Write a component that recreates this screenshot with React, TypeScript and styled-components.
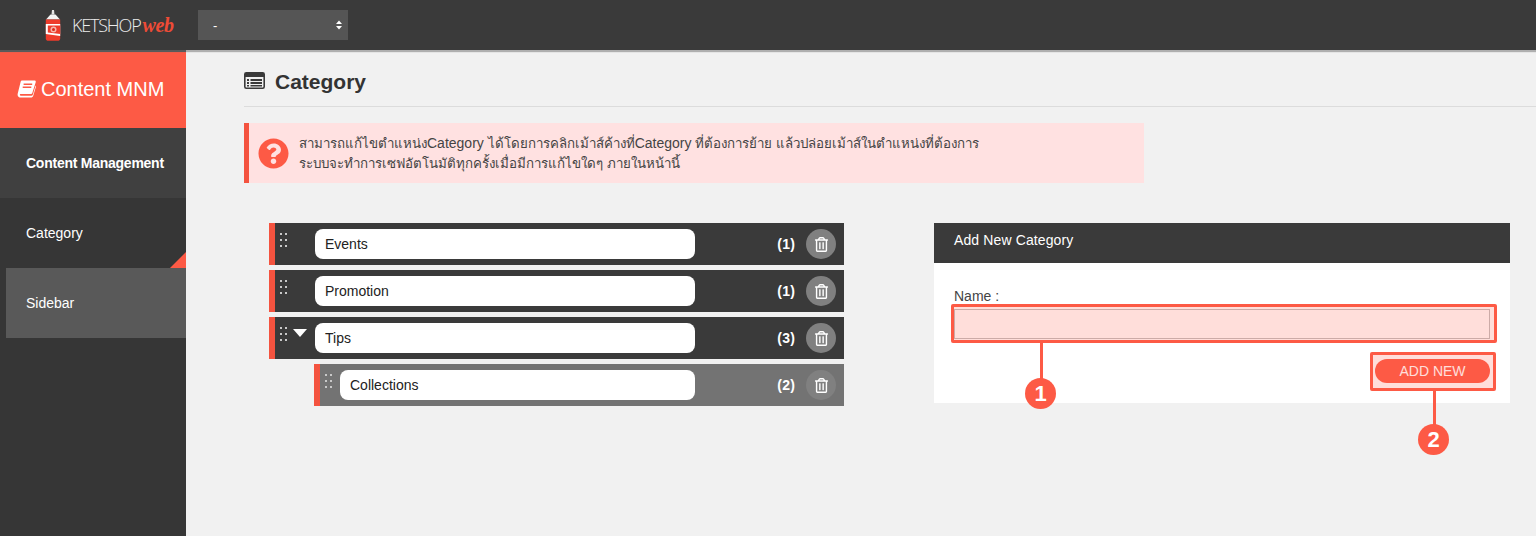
import React from 'react';
import styled, { createGlobalStyle } from 'styled-components';
import { FaQuestionCircle, FaRegTrashAlt } from 'react-icons/fa';

const RED = '#fd5a45';

const GlobalStyle = createGlobalStyle`
  html, body {
    margin: 0;
    padding: 0;
    height: 536px;
    overflow: hidden;
    background: #f1f1f1;
    font-family: "Liberation Sans", Arial, sans-serif;
    font-size: 14px;
    color: #333;
  }
  * { box-sizing: border-box; }
`;

const Page = styled.div`
  width: 1536px;
  height: 536px;
  display: flex;
  flex-direction: column;
  overflow: hidden;
`;

// Top bar
const TopBar = styled.header`
  height: 50px;
  flex: none;
  display: flex;
  align-items: center;
  padding-left: 45px;
  background: #3a3a3a;
  position: relative;
  z-index: 2;
  box-shadow: 0 2px 1px rgba(120, 120, 120, 0.55);
`;

const Logo = styled.div`
  width: 153px;
  display: flex;
  align-items: center;
  gap: 11px;
`;

const LogoWords = styled.div`
  display: flex;
  align-items: baseline;
  height: 24px;
  line-height: 24px;
`;

const LogoName = styled.span`
  font-family: "Open Sans", sans-serif;
  font-weight: 300;
  font-size: 18px;
  letter-spacing: -1.2px;
  color: #ececec;
`;

const LogoWeb = styled.span`
  font-family: "Liberation Serif", serif;
  font-style: italic;
  font-weight: 700;
  font-size: 20px;
  letter-spacing: -0.4px;
  color: #ee4b36;
  margin-left: 2px;
`;

const ShopSelect = styled.div`
  width: 150px;
  height: 30px;
  display: flex;
  align-items: center;
  justify-content: space-between;
  padding: 0 5px 0 15px;
  background: #555;
  color: #fff;
  font-size: 13px;
`;

// Sidebar
const Body = styled.div`
  flex: 1;
  display: flex;
  min-height: 0;
`;

const Sidebar = styled.aside`
  width: 186px;
  flex: none;
  padding-top: 2px;
  background: #363636;
`;

const Brand = styled.div`
  height: 76px;
  display: flex;
  align-items: center;
  gap: 5px;
  padding: 0 0 2px 17px;
  background: ${RED};
  color: #fff;
  font-size: 20px;
`;

const NavItem = styled.div<{ $tone: 'light' | 'plain' | 'active'; $corner?: boolean }>`
  height: 70px;
  display: flex;
  align-items: center;
  padding-left: ${(p) => (p.$tone === 'active' ? 20 : 26)}px;
  margin-left: ${(p) => (p.$tone === 'active' ? 6 : 0)}px;
  position: relative;
  color: #fff;
  font-weight: ${(p) => (p.$tone === 'light' ? 700 : 400)};
  letter-spacing: ${(p) => (p.$tone === 'light' ? '-0.25px' : '0')};
  background: ${(p) => (p.$tone === 'light' ? '#404040' : p.$tone === 'active' ? '#595959' : '#363636')};

  ${(p) =>
    p.$corner &&
    `&::after {
      content: '';
      position: absolute;
      right: 0;
      bottom: 0;
      border-style: solid;
      border-width: 0 0 16px 16px;
      border-color: transparent transparent ${RED} transparent;
    }`}
`;

// Main column
const Main = styled.main`
  flex: 1;
  min-width: 0;
  padding: 18px 0 0 58px;
`;

const TitleRow = styled.div`
  height: 39px;
  display: flex;
  align-items: flex-start;
  gap: 10px;
  border-bottom: 1px solid #dcdcdc;
  font-size: 21px;
  font-weight: 700;
  line-height: 28px;
  color: #333;
  svg {
    margin-top: 4px;
  }
`;

const Alert = styled.div`
  width: 900px;
  height: 60px;
  margin-top: 16px;
  display: flex;
  align-items: center;
  gap: 10px;
  padding-left: 9px;
  background: #ffe1e1;
  border-left: 5px solid #f4533f;
  font-size: 13.3px;
  line-height: 20px;
  color: #444;
  svg {
    flex: none;
    font-size: 31px;
    color: ${RED};
  }
`;

const AlertLatin = styled.span`
  font-size: 14px;
`;

const Columns = styled.div`
  display: flex;
  align-items: flex-start;
  gap: 90px;
  margin: 40px 0 0 25px;
`;

const CategoryList = styled.div`
  width: 575px;
  display: flex;
  flex-direction: column;
  gap: 5px;
`;

const CategoryRow = styled.div<{ $child?: boolean }>`
  height: 42px;
  display: flex;
  align-items: center;
  margin-left: ${(p) => (p.$child ? 45 : 0)}px;
  padding-right: 8px;
  position: relative;
  background: ${(p) => (p.$child ? '#737373' : '#3a3a3a')};
  border-left: 6px solid #f4533f;
`;

const Handle = styled.svg`
  position: absolute;
  left: 5px;
  top: 10px;
`;

const Caret = styled.div`
  position: absolute;
  left: 18px;
  top: 12px;
  border-style: solid;
  border-width: 8px 7.5px 0 7.5px;
  border-color: #fff transparent transparent transparent;
`;

const NameBox = styled.div<{ $child?: boolean }>`
  width: ${(p) => (p.$child ? 355 : 380)}px;
  height: 30px;
  margin-left: ${(p) => (p.$child ? 20 : 40)}px;
  padding-left: 10px;
  display: flex;
  align-items: center;
  background: #fff;
  border-radius: 8px;
  color: #222;
  font-size: 14px;
`;

const Count = styled.div`
  margin-left: auto;
  margin-right: 11px;
  color: #fff;
  font-weight: 700;
  font-size: 14px;
  letter-spacing: 0.2px;
`;

const TrashButton = styled.div`
  width: 30px;
  height: 30px;
  display: flex;
  align-items: center;
  justify-content: center;
  border-radius: 50%;
  background: #808080;
  color: #fff;
  font-size: 15px;
`;

// Add panel
const Panel = styled.section`
  width: 576px;
  height: 180px;
  position: relative;
  background: #fff;
`;

const PanelHead = styled.div`
  height: 40px;
  display: flex;
  align-items: center;
  padding: 0 0 6px 20px;
  background: #3a3a3a;
  color: #fff;
  font-size: 14px;
  letter-spacing: 0.12px;
`;

const PanelBody = styled.div`
  padding: 25px 20px 0;
  display: flex;
  flex-direction: column;
`;

const FieldLabel = styled.label`
  height: 21px;
  line-height: 16px;
  font-size: 14px;
  color: #444;
`;

const NameInput = styled.div`
  height: 30px;
  background: #fff;
  border: 1px solid #c0c0c0;
`;

const AddButton = styled.div`
  width: 115px;
  height: 24px;
  margin: 20px 0 0 auto;
  display: flex;
  align-items: center;
  justify-content: center;
  border-radius: 12px;
  background: ${RED};
  color: #fff;
  font-size: 14px;
`;

// Tutorial marks over the panel
const Highlight = styled.div<{ $x: number; $y: number; $w: number; $h: number }>`
  position: absolute;
  left: ${(p) => p.$x}px;
  top: ${(p) => p.$y}px;
  width: ${(p) => p.$w}px;
  height: ${(p) => p.$h}px;
  border: 3px solid ${RED};
  border-radius: 2px;
  background: rgba(253, 90, 69, 0.2);
`;

const CalloutLine = styled.div<{ $x: number; $y: number; $h: number }>`
  position: absolute;
  left: ${(p) => p.$x}px;
  top: ${(p) => p.$y}px;
  width: 3px;
  height: ${(p) => p.$h}px;
  background: ${RED};
`;

const CalloutBadge = styled.div<{ $x: number; $y: number }>`
  position: absolute;
  left: ${(p) => p.$x}px;
  top: ${(p) => p.$y}px;
  width: 31px;
  height: 31px;
  display: flex;
  align-items: center;
  justify-content: center;
  border-radius: 50%;
  background: ${RED};
  color: #fff;
  font-size: 22px;
  font-weight: 700;
`;

const BottleIcon = () => (
  <svg width="16" height="31" viewBox="0 0 16 31">
    <path d="M7 0h2l.5 4.5h-3z" fill="#e4e4e4" />
    <path d="M5.5 4.5h5L15 9.5H1z" fill="#f4f4f4" />
    <path d="M.8 9.5H15.2V28.5C15.2 30 14 30.8 12.8 30.8H3.2C2 30.8 .8 30 .8 28.5z" fill="#ee3b2b" />
    <path d="M.8 14H15.2V26L.8 24z" fill="#fff" />
    <path d="M2.8 15.5H15.2V24L2.8 22.5z" fill="#ee3b2b" />
    <circle cx="8.5" cy="19.5" r="3" fill="#f7b5ab" />
    <circle cx="8.5" cy="19.5" r="1.5" fill="#d8281a" />
  </svg>
);

const BookIcon = () => (
  <svg width="19" height="18" viewBox="0 0 19 18">
    <path d="M5 .5H17.5C18.5 .5 19 1.2 18.7 2.2L15.3 13C15 13.8 14.5 14 13.8 14H3.6C3 14 2.6 14.7 3 15.2 3.3 15.6 3.8 15.7 4.4 15.7H14.2C15 15.7 15.6 15.3 15.9 14.4L18.6 5.4 19 6.4 16.3 15.6C15.9 17 15 17.6 13.8 17.6H3.8C2 17.6.6 16.4.6 14.7.6 14 .7 13.5 1 12.6L3.6 2C3.8 1 4.3 .5 5 .5z" fill="#fff" />
    <path d="M6.6 4.2H15.2M5.7 7.2H14.3" stroke={RED} strokeWidth="1.4" />
  </svg>
);

const ListAltIcon = () => (
  <svg width="21" height="17" viewBox="0 0 21 17">
    <rect x="0.8" y="0.8" width="19.4" height="15.4" rx="1.5" fill="#f1f1f1" stroke="#3a3a3a" strokeWidth="1.6" />
    <rect x="1" y="1" width="19" height="4" fill="#3a3a3a" />
    <path d="M3 7h2v2H3zM3 10h2v2H3zM3 13h2v1.6H3z" fill="#3a3a3a" />
    <path d="M6.5 7h11.5v2H6.5zM6.5 10h11.5v2H6.5zM6.5 13h11.5v1.6H6.5z" fill="#3a3a3a" />
  </svg>
);

const SelectArrows = () => (
  <svg width="8" height="10" viewBox="0 0 8 10">
    <path d="M4 0.5 7 4H1zM4 9.5 1 6h6z" fill="#fff" />
  </svg>
);

const GripDots = () => (
  <Handle width="8" height="14" viewBox="0 0 8 14">
    {[0, 5].map((x) =>
      [0, 6, 12].map((y) => <rect key={`${x}-${y}`} x={x} y={y} width="2" height="2" fill="#c9c9c9" />)
    )}
  </Handle>
);

const categories = [
  { name: 'Events', count: 1 },
  { name: 'Promotion', count: 1 },
  { name: 'Tips', count: 3, open: true },
  { name: 'Collections', count: 2, child: true },
];

export default function App() {
  return (
    <Page>
      <GlobalStyle />
      <TopBar>
        <Logo>
          <BottleIcon />
          <LogoWords>
            <LogoName>KETSHOP</LogoName>
            <LogoWeb>web</LogoWeb>
          </LogoWords>
        </Logo>
        <ShopSelect>
          -
          <SelectArrows />
        </ShopSelect>
      </TopBar>
      <Body>
        <Sidebar>
          <Brand>
            <BookIcon />
            Content MNM
          </Brand>
          <NavItem $tone="light">Content Management</NavItem>
          <NavItem $tone="plain" $corner>Category</NavItem>
          <NavItem $tone="active">Sidebar</NavItem>
        </Sidebar>
        <Main>
          <TitleRow>
            <ListAltIcon />
            Category
          </TitleRow>
          <Alert>
            <FaQuestionCircle />
            <div>
              สามารถแก้ไขตำแหน่ง<AlertLatin>Category </AlertLatin>ได้โดยการคลิกเม้าส์ค้างที่<AlertLatin>Category </AlertLatin>ที่ต้องการย้าย แล้วปล่อยเม้าส์ในตำแหน่งที่ต้องการ
              <br />
              ระบบจะทำการเซฟอัตโนมัติทุกครั้งเมื่อมีการแก้ไขใดๆ ภายในหน้านี้
            </div>
          </Alert>
          <Columns>
            <CategoryList>
              {categories.map((item) => (
                <CategoryRow key={item.name} $child={item.child}>
                  <GripDots />
                  {item.open && <Caret />}
                  <NameBox $child={item.child}>{item.name}</NameBox>
                  <Count>({item.count})</Count>
                  <TrashButton>
                    <FaRegTrashAlt />
                  </TrashButton>
                </CategoryRow>
              ))}
            </CategoryList>
            <Panel>
              <PanelHead>Add New Category</PanelHead>
              <PanelBody>
                <FieldLabel>Name :</FieldLabel>
                <NameInput />
                <AddButton>ADD NEW</AddButton>
              </PanelBody>
              <Highlight $x={17} $y={81} $w={546} $h={39} />
              <Highlight $x={436} $y={129} $w={126} $h={39} />
              <CalloutLine $x={106} $y={120} $h={40} />
              <CalloutBadge $x={91} $y={155}>1</CalloutBadge>
              <CalloutLine $x={499} $y={168} $h={40} />
              <CalloutBadge $x={484} $y={201}>2</CalloutBadge>
            </Panel>
          </Columns>
        </Main>
      </Body>
    </Page>
  );
}
